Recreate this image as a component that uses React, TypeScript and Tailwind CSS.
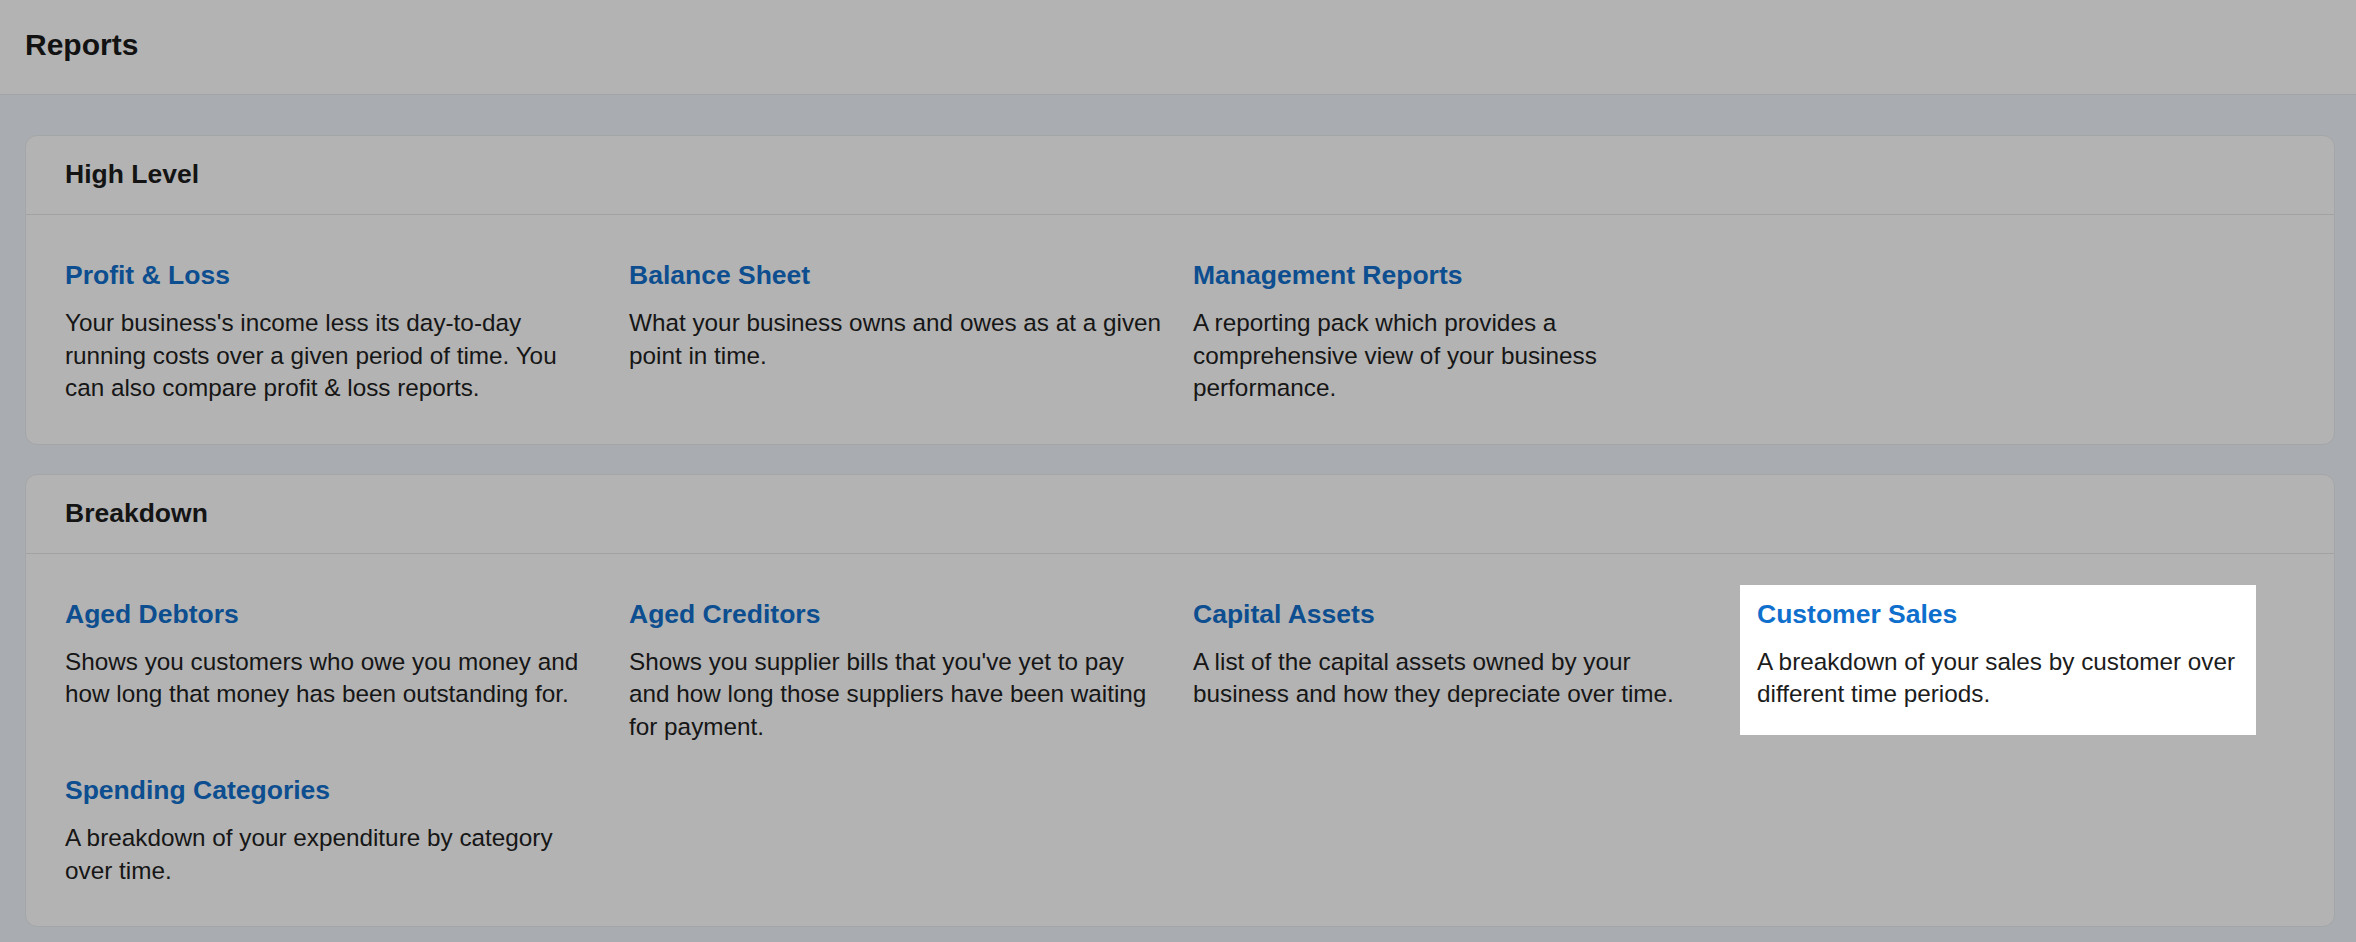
type Report = {
  title: string;
  lines: string[];
  active?: boolean;
};

type Section = {
  title: string;
  reports: Report[];
};

const SECTIONS: Section[] = [
  {
    title: "High Level",
    reports: [
      {
        title: "Profit & Loss",
        lines: [
          "Your business's income less its day-to-day",
          "running costs over a given period of time. You",
          "can also compare profit & loss reports.",
        ],
      },
      {
        title: "Balance Sheet",
        lines: ["What your business owns and owes as at a given", "point in time."],
      },
      {
        title: "Management Reports",
        lines: [
          "A reporting pack which provides a",
          "comprehensive view of your business",
          "performance.",
        ],
      },
    ],
  },
  {
    title: "Breakdown",
    reports: [
      {
        title: "Aged Debtors",
        lines: [
          "Shows you customers who owe you money and",
          "how long that money has been outstanding for.",
        ],
      },
      {
        title: "Aged Creditors",
        lines: [
          "Shows you supplier bills that you've yet to pay",
          "and how long those suppliers have been waiting",
          "for payment.",
        ],
      },
      {
        title: "Capital Assets",
        lines: [
          "A list of the capital assets owned by your",
          "business and how they depreciate over time.",
        ],
      },
      {
        title: "Customer Sales",
        lines: ["A breakdown of your sales by customer over", "different time periods."],
        active: true,
      },
      {
        title: "Spending Categories",
        lines: ["A breakdown of your expenditure by category", "over time."],
      },
    ],
  },
];

function ReportLink({ report }: { report: Report }) {
  const { title, lines, active } = report;
  return (
    <a
      href="#"
      className={
        active
          ? "block w-[516px] bg-white px-[17px] pt-[11px] pb-[24px]"
          : "block px-[17px] pt-[11px]"
      }
    >
      <h3
        className={
          active
            ? "text-[26.5px] font-bold leading-[36px] text-[#0f6fcd]"
            : "text-[26.5px] font-bold leading-[36px] text-[#0c4e8f]"
        }
      >
        {title}
      </h3>
      <p
        className={
          active
            ? "mt-[14px] text-[24.3px] leading-[32.5px] text-[#1c1c1c]"
            : "mt-[14px] text-[24.3px] leading-[32.5px] text-[#161616]"
        }
      >
        {lines.map((line, i) => (
          <span key={i} className="block whitespace-nowrap">
            {line}
          </span>
        ))}
      </p>
    </a>
  );
}

function ReportSection({ section }: { section: Section }) {
  return (
    <section className="rounded-[12px] border border-[#a4a5a7] bg-[#b3b3b3]">
      <div className="flex h-[79px] items-center border-b border-[#a2a2a2] pl-[39px]">
        <h2 className="text-[26.5px] font-bold text-[#141414]">{section.title}</h2>
      </div>
      <div className="grid grid-cols-[repeat(4,564px)] items-start gap-y-[18px] pl-[22px] pt-[31px] pb-[39px]">
        {section.reports.map((r) => (
          <ReportLink key={r.title} report={r} />
        ))}
      </div>
    </section>
  );
}

export default function App() {
  return (
    <div className="min-h-screen bg-[#a9acb1] font-['Liberation_Sans',Arial,sans-serif]">
      <header className="h-[95px] border-b border-[#a1a3a7] bg-[#b3b3b3] pl-[25px] pt-[27px]">
        <h1 className="text-[30px] font-bold leading-[36px] text-[#121212]">Reports</h1>
      </header>
      <main className="flex flex-col gap-[29px] pl-[25px] pr-[21px] pt-[40px] pb-4">
        {SECTIONS.map((s) => (
          <ReportSection key={s.title} section={s} />
        ))}
      </main>
    </div>
  );
}
